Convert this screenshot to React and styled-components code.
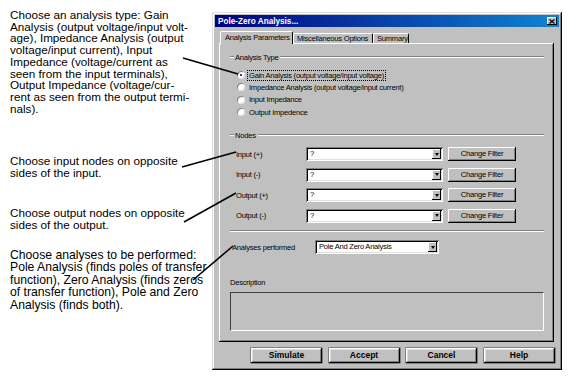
import React from 'react';
import styled, { createGlobalStyle } from 'styled-components';

const GlobalStyle = createGlobalStyle`
  html, body { margin: 0; padding: 0; background: #fff; }
  body { width: 585px; height: 377px; overflow: hidden; }
`;

const Page = styled.div`
  position: relative;
  display: flex;
  width: 585px;
  height: 377px;
  font-family: "Liberation Sans", Arial, sans-serif;
`;

const Notes = styled.div`
  flex-shrink: 0;
  width: 212px;
  padding: 9px 0 0 10px;
  box-sizing: border-box;
`;

const Note = styled.p`
  margin: ${p => p.$top}px 0 0;
  font-size: ${p => p.$size}px;
  line-height: ${p => p.$lh}px;
  color: #000;
  white-space: nowrap;
`;

const Pointers = styled.svg`
  position: absolute;
  left: 0;
  top: 0;
  width: 585px;
  height: 377px;
  pointer-events: none;
  line { stroke: #000; stroke-width: 1.6; }
`;

const Dialog = styled.div`
  width: 350px;
  height: 358px;
  margin-top: 12px;
  padding: 3px;
  box-sizing: border-box;
  background: #c0c0c0;
  box-shadow: inset -1px -1px #000, inset 1px 1px #dfdfdf,
    inset -2px -2px #808080, inset 2px 2px #fff;
  font-family: "Liberation Sans", Arial, sans-serif;
  font-size: 7.6px;
  letter-spacing: -0.25px;
  color: #000;
`;

const TitleBar = styled.div`
  display: flex;
  align-items: center;
  justify-content: space-between;
  height: 12px;
  padding: 0 2px 0 3px;
  background: linear-gradient(to right, #000080, #1084d0);
  color: #fff;
  font-size: 8.2px;
  font-weight: bold;
  letter-spacing: 0;
`;

const CloseBox = styled.div`
  display: flex;
  align-items: center;
  justify-content: center;
  width: 10px;
  height: 8px;
  background: #c0c0c0;
  box-shadow: inset -1px -1px #000, inset 1px 1px #fff;
`;

const TabStrip = styled.div`
  display: flex;
  align-items: flex-start;
  height: 12px;
  margin-top: 4px;
  padding-left: 5px;
`;

const Tab = styled.div`
  position: relative;
  z-index: 1;
  width: ${p => p.$w}px;
  height: ${p => (p.$active ? 13 : 10)}px;
  margin-top: ${p => (p.$active ? 0 : 2)}px;
  box-sizing: border-box;
  padding-left: ${p => (p.$active ? 4 : 3)}px;
  line-height: ${p => (p.$active ? 12 : 10)}px;
  white-space: nowrap;
  overflow: hidden;
  background: #c0c0c0;
  border-top: 1px solid #fff;
  border-left: 1px solid #fff;
  border-right: 1px solid #000;
  border-radius: 2px 2px 0 0;
`;

const Panel = styled.div`
  width: 335px;
  height: 299px;
  margin-left: 4px;
  padding: 1px 0 0 11px;
  box-sizing: border-box;
  box-shadow: inset -1px -1px #000, inset 1px 1px #fff, inset -2px -2px #808080;
`;

const GroupHeader = styled.div`
  display: flex;
  align-items: center;
  height: 10px;
  width: 314px;
  margin-top: ${p => p.$top}px;
  &::before {
    content: "";
    width: 4px;
    margin-right: 1px;
    border-top: 1px solid #808080;
    border-bottom: 1px solid #fff;
  }
  &::after {
    content: "";
    flex: 1;
    margin-left: 2px;
    border-top: 1px solid #808080;
    border-bottom: 1px solid #fff;
  }
`;

const RadioList = styled.div`
  margin: 7px 0 0 7px;
`;

const RadioRow = styled.div`
  display: flex;
  align-items: center;
  height: 12.3px;
`;

const RadioDot = styled.span`
  display: flex;
  align-items: center;
  justify-content: center;
  width: 8px;
  height: 8px;
  margin-right: 3px;
  border-radius: 50%;
  background: #fff;
  box-shadow: inset 1px 1px #808080, inset -1px -1px #dfdfdf;
  &::after {
    content: "";
    width: 2px;
    height: 2px;
    border-radius: 50%;
    background: ${p => (p.$on ? '#000' : 'transparent')};
  }
`;

const RadioLabel = styled.span`
  padding: 0 1px;
  line-height: 9px;
  outline: ${p => (p.$focus ? '1px dotted #000' : 'none')};
`;

const NodeList = styled.div`
  display: flex;
  flex-direction: column;
  gap: 6.5px;
  margin: 7px 0 0 6px;
`;

const NodeRow = styled.div`
  display: flex;
  align-items: center;
  height: 14px;
`;

const FieldLabel = styled.span`
  width: ${p => p.$w}px;
  flex-shrink: 0;
`;

const Combo = styled.div`
  display: flex;
  align-items: stretch;
  width: ${p => p.$w}px;
  height: 14px;
  padding: 2px;
  box-sizing: border-box;
  background: #fff;
  box-shadow: inset 1px 1px #808080, inset -1px -1px #fff,
    inset 2px 2px #000, inset -2px -2px #dfdfdf;
`;

const ComboText = styled.span`
  flex: 1;
  padding-left: 2px;
  line-height: 10px;
  white-space: nowrap;
`;

const ComboArrow = styled.span`
  display: flex;
  align-items: center;
  justify-content: center;
  width: 9px;
  background: #c0c0c0;
  box-shadow: inset -1px -1px #000, inset 1px 1px #fff;
  &::after {
    content: "";
    border-left: 2.5px solid transparent;
    border-right: 2.5px solid transparent;
    border-top: 3px solid #000;
  }
`;

const SmallButton = styled.div`
  width: 68px;
  height: 14px;
  margin-left: 5px;
  line-height: 14px;
  text-align: center;
  background: #c0c0c0;
  box-shadow: inset -1px -1px #000, inset 1px 1px #fff, inset -2px -2px #808080;
`;

const Separator = styled.div`
  width: 314px;
  margin-top: 7.5px;
  border-top: 1px solid #808080;
  border-bottom: 1px solid #fff;
`;

const AnalysesRow = styled.div`
  display: flex;
  align-items: center;
  height: 14px;
  margin: 8px 0 0 2px;
`;

const Caption = styled.div`
  height: 10px;
  line-height: 10px;
  margin-top: 24px;
`;

const DescBox = styled.div`
  width: 314px;
  height: 39px;
  margin-top: 4px;
  box-sizing: border-box;
  border-top: 1px solid #404040;
  border-left: 1px solid #404040;
  border-right: 1px solid #fff;
  border-bottom: 1px solid #fff;
`;

const ButtonRow = styled.div`
  display: flex;
  gap: 6.5px;
  margin: 6px 0 0 36px;
`;

const DialogButton = styled.div`
  width: 71px;
  height: 15px;
  line-height: 15px;
  text-align: center;
  font-size: 8.5px;
  font-weight: bold;
  letter-spacing: 0;
  background: #c0c0c0;
  box-shadow: inset -1px -1px #000, inset 1px 1px #fff,
    inset -2px -2px #808080, inset 2px 2px #dfdfdf, 0 0 0 0.5px #404040;
`;

const radios = [
  'Gain Analysis (output voltage/input voltage)',
  'Impedance Analysis (output voltage/input current)',
  'Input Impedance',
  'Output Impedence',
];

const nodes = ['Input (+)', 'Input (-)', 'Output (+)', 'Output (-)'];

export default function App() {
  return (
    <Page>
      <GlobalStyle />
      <Notes>
        <Note $top={0} $size={11.7} $lh={11.7}>
          Choose an analysis type: Gain<br />
          Analysis (output voltage/input volt-<br />
          age), Impedance Analysis (output<br />
          voltage/input current), Input<br />
          Impedance (voltage/current as<br />
          seen from the input terminals),<br />
          Output Impedance (voltage/cur-<br />
          rent as seen from the output termi-<br />
          nals).
        </Note>
        <Note $top={40.85} $size={11.7} $lh={11.7}>
          Choose input nodes on opposite<br />
          sides of the input.
        </Note>
        <Note $top={28.6} $size={11.7} $lh={11.7}>
          Choose output nodes on opposite<br />
          sides of the output.
        </Note>
        <Note $top={18.2} $size={12.2} $lh={12.5}>
          Choose analyses to be performed:<br />
          Pole Analysis (finds poles of transfer<br />
          function), Zero Analysis (finds zeros<br />
          of transfer function), Pole and Zero<br />
          Analysis (finds both).
        </Note>
      </Notes>

      <Dialog>
        <TitleBar>
          <span>Pole-Zero Analysis...</span>
          <CloseBox>
            <svg width="6" height="5" viewBox="0 0 6 5">
              <path d="M0.5 0.5 L5.5 4.5 M5.5 0.5 L0.5 4.5" stroke="#000" strokeWidth="1.2" />
            </svg>
          </CloseBox>
        </TitleBar>

        <TabStrip>
          <Tab $active $w={73}>Analysis Parameters</Tab>
          <Tab $w={80}>Miscellaneous Options</Tab>
          <Tab $w={36}>Summary</Tab>
        </TabStrip>

        <Panel>
          <GroupHeader $top={8}>Analysis Type</GroupHeader>
          <RadioList>
            {radios.map((r, i) => (
              <RadioRow key={r}>
                <RadioDot $on={i === 0} />
                <RadioLabel $focus={i === 0}>{r}</RadioLabel>
              </RadioRow>
            ))}
          </RadioList>

          <GroupHeader $top={12}>Nodes</GroupHeader>
          <NodeList>
            {nodes.map(n => (
              <NodeRow key={n}>
                <FieldLabel $w={70}>{n}</FieldLabel>
                <Combo $w={137}>
                  <ComboText>?</ComboText>
                  <ComboArrow />
                </Combo>
                <SmallButton>Change Filter</SmallButton>
              </NodeRow>
            ))}
          </NodeList>

          <Separator />

          <AnalysesRow>
            <FieldLabel $w={83}>Analyses performed</FieldLabel>
            <Combo $w={124}>
              <ComboText>Pole And Zero Analysis</ComboText>
              <ComboArrow />
            </Combo>
          </AnalysesRow>

          <Caption>Description</Caption>
          <DescBox />
        </Panel>

        <ButtonRow>
          <DialogButton>Simulate</DialogButton>
          <DialogButton>Accept</DialogButton>
          <DialogButton>Cancel</DialogButton>
          <DialogButton>Help</DialogButton>
        </ButtonRow>
      </Dialog>

      <Pointers viewBox="0 0 585 377">
        <line x1="183" y1="58" x2="238" y2="74" />
        <line x1="182" y1="167" x2="236" y2="152" />
        <line x1="184" y1="222" x2="236" y2="193" />
        <line x1="193" y1="280" x2="233" y2="246" />
      </Pointers>
    </Page>
  );
}
